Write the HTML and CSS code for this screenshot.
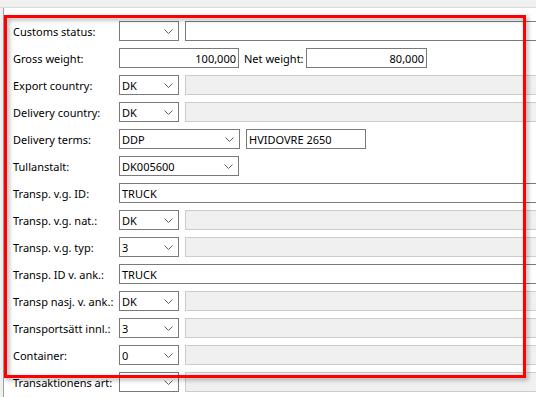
FILE: index.html
```html
<!DOCTYPE html>
<html>
<head>
<meta charset="utf-8">
<link rel="stylesheet" href="styles.css">
</head>
<body>
<div class="topbar"></div>
<div class="panel">
  <div class="row"><span class="lbl">Customs status:</span><div class="sel w60"><span class="val"></span><svg class="chev" width="9" height="5" viewBox="0 0 9 5"><polyline points="0.5,0.5 4.5,4.5 8.5,0.5"/></svg></div><div class="txt grow after"></div></div>
  <div class="row"><span class="lbl">Gross weight:</span><div class="txt w120 num">100,000</div><span class="lbl2">Net weight:</span><div class="txt w121 num">80,000</div></div>
  <div class="row"><span class="lbl">Export country:</span><div class="sel w60"><span class="val">DK</span><svg class="chev" width="9" height="5" viewBox="0 0 9 5"><polyline points="0.5,0.5 4.5,4.5 8.5,0.5"/></svg></div><div class="txt grow after dis"></div></div>
  <div class="row"><span class="lbl">Delivery country:</span><div class="sel w60"><span class="val">DK</span><svg class="chev" width="9" height="5" viewBox="0 0 9 5"><polyline points="0.5,0.5 4.5,4.5 8.5,0.5"/></svg></div><div class="txt grow after dis"></div></div>
  <div class="row"><span class="lbl">Delivery terms:</span><div class="sel w121"><span class="val">DDP</span><svg class="chev" width="9" height="5" viewBox="0 0 9 5"><polyline points="0.5,0.5 4.5,4.5 8.5,0.5"/></svg></div><div class="txt w120 after">HVIDOVRE 2650</div></div>
  <div class="row"><span class="lbl">Tullanstalt:</span><div class="sel w120"><span class="val">DK005600</span><svg class="chev" width="9" height="5" viewBox="0 0 9 5"><polyline points="0.5,0.5 4.5,4.5 8.5,0.5"/></svg></div></div>
  <div class="row"><span class="lbl">Transp. v.g. ID:</span><div class="txt grow">TRUCK</div></div>
  <div class="row"><span class="lbl">Transp. v.g. nat.:</span><div class="sel w60"><span class="val">DK</span><svg class="chev" width="9" height="5" viewBox="0 0 9 5"><polyline points="0.5,0.5 4.5,4.5 8.5,0.5"/></svg></div><div class="txt grow after dis"></div></div>
  <div class="row"><span class="lbl">Transp. v.g. typ:</span><div class="sel w60"><span class="val">3</span><svg class="chev" width="9" height="5" viewBox="0 0 9 5"><polyline points="0.5,0.5 4.5,4.5 8.5,0.5"/></svg></div><div class="txt grow after dis"></div></div>
  <div class="row"><span class="lbl">Transp. ID v. ank.:</span><div class="txt grow">TRUCK</div></div>
  <div class="row"><span class="lbl">Transp nasj. v. ank.:</span><div class="sel w60"><span class="val">DK</span><svg class="chev" width="9" height="5" viewBox="0 0 9 5"><polyline points="0.5,0.5 4.5,4.5 8.5,0.5"/></svg></div><div class="txt grow after dis"></div></div>
  <div class="row"><span class="lbl">Transportsätt innl.:</span><div class="sel w60"><span class="val">3</span><svg class="chev" width="9" height="5" viewBox="0 0 9 5"><polyline points="0.5,0.5 4.5,4.5 8.5,0.5"/></svg></div><div class="txt grow after dis"></div></div>
  <div class="row"><span class="lbl">Container:</span><div class="sel w60"><span class="val">0</span><svg class="chev" width="9" height="5" viewBox="0 0 9 5"><polyline points="0.5,0.5 4.5,4.5 8.5,0.5"/></svg></div><div class="txt grow after dis"></div></div>
  <div class="row"><span class="lbl">Transaktionens art:</span><div class="sel w60"><span class="val"></span><svg class="chev" width="9" height="5" viewBox="0 0 9 5"><polyline points="0.5,0.5 4.5,4.5 8.5,0.5"/></svg></div><div class="txt grow after dis"></div></div>
</div>
<div class="mark"></div>
</body>
</html>
```

FILE: styles.css
```css
html, body {
  margin: 0;
  padding: 0;
}
body {
  width: 536px;
  height: 397px;
  overflow: hidden;
  background: #f0f0f0;
  font-family: "Noto Sans", "Liberation Sans", Arial, sans-serif;
  font-size: 11px;
  color: #000;
  position: relative;
}
.topbar {
  height: 7px;
  border-bottom: 1px solid #dadada;
  background: #f0f0f0;
}
.panel {
  margin-left: 3px;
  width: 640px;
  height: 400px;
  background: #fff;
  border-left: 1px solid #a0a0a0;
  padding: 13px 0 0 9px;
  box-sizing: border-box;
}
.row {
  display: flex;
  align-items: center;
  height: 20px;
  margin-bottom: 7px;
  white-space: nowrap;
}
.lbl {
  width: 106px;
  flex: none;
}
.lbl2 {
  width: 62px;
  margin-left: 5px;
  flex: none;
}
.sel, .txt {
  height: 20px;
  box-sizing: border-box;
  border: 1px solid #7a7a7a;
  background: #fff;
  display: flex;
  align-items: center;
  padding: 0 2px;
  flex: none;
}
.sel {
  justify-content: space-between;
  padding-right: 5px;
}
.after {
  margin-left: 6px;
}
.w60 { width: 60px; }
.w120 { width: 120px; }
.w121 { width: 121px; }
.grow { width: 460px; }
.num {
  justify-content: flex-end;
}
.dis {
  background: #f0f0f0;
  border-color: #cccccc;
}
.chev {
  flex: none;
}
.chev polyline {
  fill: none;
  stroke: #606060;
  stroke-width: 1;
}
.mark {
  position: absolute;
  left: 4px;
  top: 15px;
  width: 522px;
  height: 363px;
  box-sizing: border-box;
  border: 3px solid #ff0000;
  filter: drop-shadow(2px 2px 2px rgba(0,0,0,0.35));
}
```
